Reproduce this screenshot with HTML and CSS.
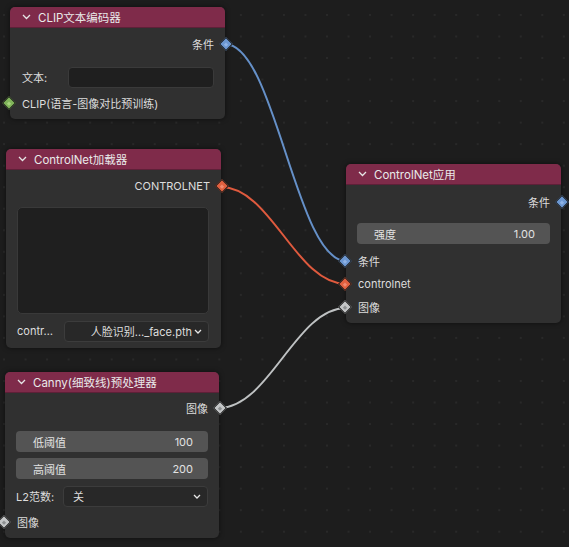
FILE: index.html
```html
<!DOCTYPE html>
<html lang="zh">
<head>
<meta charset="utf-8">
<link rel="stylesheet" href="styles.css">
</head>
<body>
<div class="canvas">
  <svg class="wires" width="569" height="547" viewBox="0 0 569 547">
    <path class="w-blue" d="M225 44 C 275 44, 296 261, 346 261"/>
    <path class="w-red" d="M221 187 C 271 187, 296 284, 346 284"/>
    <path class="w-grey" d="M219 408 C 269 408, 296 308, 346 308"/>
  </svg>

  <div class="node n-clip">
    <div class="hdr"><svg class="chev" width="9" height="6" viewBox="0 0 9 6"><polyline points="1,1 4.5,4.5 8,1"/></svg><span>CLIP文本编码器</span></div>
    <div class="body b-clip">
      <div class="row out">条件<i class="sock s-blue"></i></div>
      <div class="row field"><span class="lbl">文本:</span><div class="textbox"></div></div>
      <div class="row in"><i class="sock s-green"></i>CLIP(语言-图像对比预训练)</div>
    </div>
  </div>

  <div class="node n-load">
    <div class="hdr"><svg class="chev" width="9" height="6" viewBox="0 0 9 6"><polyline points="1,1 4.5,4.5 8,1"/></svg><span>ControlNet加载器</span></div>
    <div class="body b-load">
      <div class="row out">CONTROLNET<i class="sock s-red"></i></div>
      <div class="preview"></div>
      <div class="row field f-load"><span class="lbl">contr…</span><div class="dropdown dd-right"><span>人脸识别…_face.pth</span><svg class="dchev" width="8" height="5" viewBox="0 0 8 5"><polyline points="1,1 4,4 7,1"/></svg></div></div>
    </div>
  </div>

  <div class="node n-canny">
    <div class="hdr"><svg class="chev" width="9" height="6" viewBox="0 0 9 6"><polyline points="1,1 4.5,4.5 8,1"/></svg><span>Canny(细致线)预处理器</span></div>
    <div class="body b-canny">
      <div class="row out">图像<i class="sock s-grey"></i></div>
      <div class="slider first"><span>低阈值</span><span>100</span></div>
      <div class="slider"><span>高阈值</span><span>200</span></div>
      <div class="row field f-l2"><span class="lbl">L2范数:</span><div class="dropdown"><span>关</span><svg class="dchev" width="8" height="5" viewBox="0 0 8 5"><polyline points="1,1 4,4 7,1"/></svg></div></div>
      <div class="row in"><i class="sock s-grey"></i>图像</div>
    </div>
  </div>

  <div class="node n-apply">
    <div class="hdr"><svg class="chev" width="9" height="6" viewBox="0 0 9 6"><polyline points="1,1 4.5,4.5 8,1"/></svg><span>ControlNet应用</span></div>
    <div class="body b-apply">
      <div class="row out">条件<i class="sock s-blue"></i></div>
      <div class="slider"><span>强度</span><span>1.00</span></div>
      <div class="inputs">
        <div class="row in r23"><i class="sock s-blue"></i>条件</div>
        <div class="row in r23"><i class="sock s-red"></i>controlnet</div>
        <div class="row in r23"><i class="sock s-grey"></i>图像</div>
      </div>
    </div>
  </div>
</div>
</body>
</html>
```
FILE: styles.css
```css
html, body {
  margin: 0;
  padding: 0;
  background: #1d1d1d;
}
.canvas {
  position: relative;
  width: 569px;
  height: 547px;
  overflow: hidden;
  background-color: #1d1d1d;
  background-image: radial-gradient(circle, #292929 0, #292929 1px, rgba(41,41,41,0) 1.4px);
  background-size: 21.54px 21.54px;
  background-position: 14.8px 4.2px;
  font-family: Inter, "Noto Sans CJK SC", sans-serif;
  font-size: 11px;
  color: #dddddd;
}
.wires {
  position: absolute;
  left: 0;
  top: 0;
}
.wires path {
  fill: none;
  stroke-width: 2;
}
.w-blue { stroke: #6590c8; }
.w-red { stroke: #df5a3e; }
.w-grey { stroke: #bfc2c3; }

.node {
  position: absolute;
  background: #303030;
  border-radius: 5px;
  box-shadow: 0 0 5px rgba(0,0,0,0.55);
  display: flex;
  flex-direction: column;
}
.n-clip { left: 10px; top: 7px; width: 215px; height: 112px; }
.n-load { left: 6px; top: 149px; width: 215px; height: 199px; }
.n-canny { left: 5px; top: 372px; width: 214px; height: 166px; }
.n-apply { left: 346px; top: 164px; width: 215px; height: 159px; }

.hdr {
  height: 21px;
  background: #7f2b4a;
  border-radius: 5px 5px 0 0;
  border-bottom: 1px solid #5e2038;
  display: flex;
  align-items: center;
  padding-left: 12px;
  gap: 7px;
  color: #e9e9e9;
  font-size: 11.5px;
  flex-shrink: 0;
  box-sizing: border-box;
}
.chev polyline, .dchev polyline {
  fill: none;
  stroke: #e6e6e6;
  stroke-width: 1.3;
}
.body {
  display: flex;
  flex-direction: column;
  position: relative;
}
.row {
  position: relative;
  height: 22px;
  display: flex;
  align-items: center;
  flex-shrink: 0;
}
.row.out {
  justify-content: flex-end;
  padding-right: 11px;
}
.row.in {
  padding-left: 12px;
}
.r23 { height: 23px; }
.sock {
  position: absolute;
  top: 50%;
  width: 8px;
  height: 8px;
  margin-top: -5px;
  border: 1px solid #1a1a1a;
  transform: rotate(45deg);
  box-sizing: content-box;
  display: flex;
  align-items: center;
  justify-content: center;
}
.sock::after {
  content: "";
  width: 3px;
  height: 3px;
}
.row.out .sock { right: -6px; }
.row.in .sock { left: -6px; }
.s-blue { background: #6c97d1; }
.s-blue::after { background: #8fb3e6; }
.s-red { background: #e0603f; }
.s-red::after { background: #f08a70; }
.s-green { background: #80b45a; }
.s-green::after { background: #a6d47c; }
.s-grey { background: #c4c6c7; }
.s-grey::after { background: #8d9091; }

.field {
  padding-left: 12px;
  padding-right: 11px;
  gap: 0;
}
.lbl { color: #dddddd; }

.b-clip { padding-top: 5px; }
.b-clip .field { margin-top: 11px; }
.b-clip .lbl { width: 46px; }
.textbox {
  flex: 1;
  height: 21px;
  background: #1f1f1f;
  border: 1px solid #3a3a3a;
  border-radius: 4px;
  box-sizing: border-box;
}
.b-clip .in { margin-top: 4px; }

.b-load { padding-top: 5px; }
.preview {
  margin: 10px 12px 0 11px;
  height: 107px;
  background: #1f1f1f;
  border: 1px solid #393939;
  border-radius: 5px;
  box-sizing: border-box;
}
.f-load {
  margin-top: 6px;
  padding-left: 11px;
  padding-right: 12px;
}
.f-load .lbl { width: 47px; }

.dropdown {
  flex: 1;
  height: 21px;
  background: #282828;
  border: 1px solid #3c3c3c;
  border-radius: 4px;
  box-sizing: border-box;
  display: flex;
  align-items: center;
  padding: 0 6px 0 9px;
  gap: 2px;
}
.dropdown span { flex: 1; }
.dd-right span { text-align: right; }

.slider {
  height: 21px;
  margin: 0 11px;
  background: #545454;
  border-radius: 4px;
  display: flex;
  align-items: center;
  justify-content: space-between;
  padding: 0 15px 0 17px;
  color: #e2e2e2;
  flex-shrink: 0;
}

.b-canny { padding-top: 4px; }
.b-canny .slider { margin-top: 6px; }
.b-canny .slider.first { margin-top: 12px; }
.f-l2 { margin-top: 6px; padding-left: 11px; }
.f-l2 .lbl { width: 47px; }
.b-canny .in { margin-top: 4px; }

.b-apply { padding-top: 6px; }
.b-apply .slider { margin-top: 10px; }
.inputs { margin-top: 5px; display: flex; flex-direction: column; }
```
